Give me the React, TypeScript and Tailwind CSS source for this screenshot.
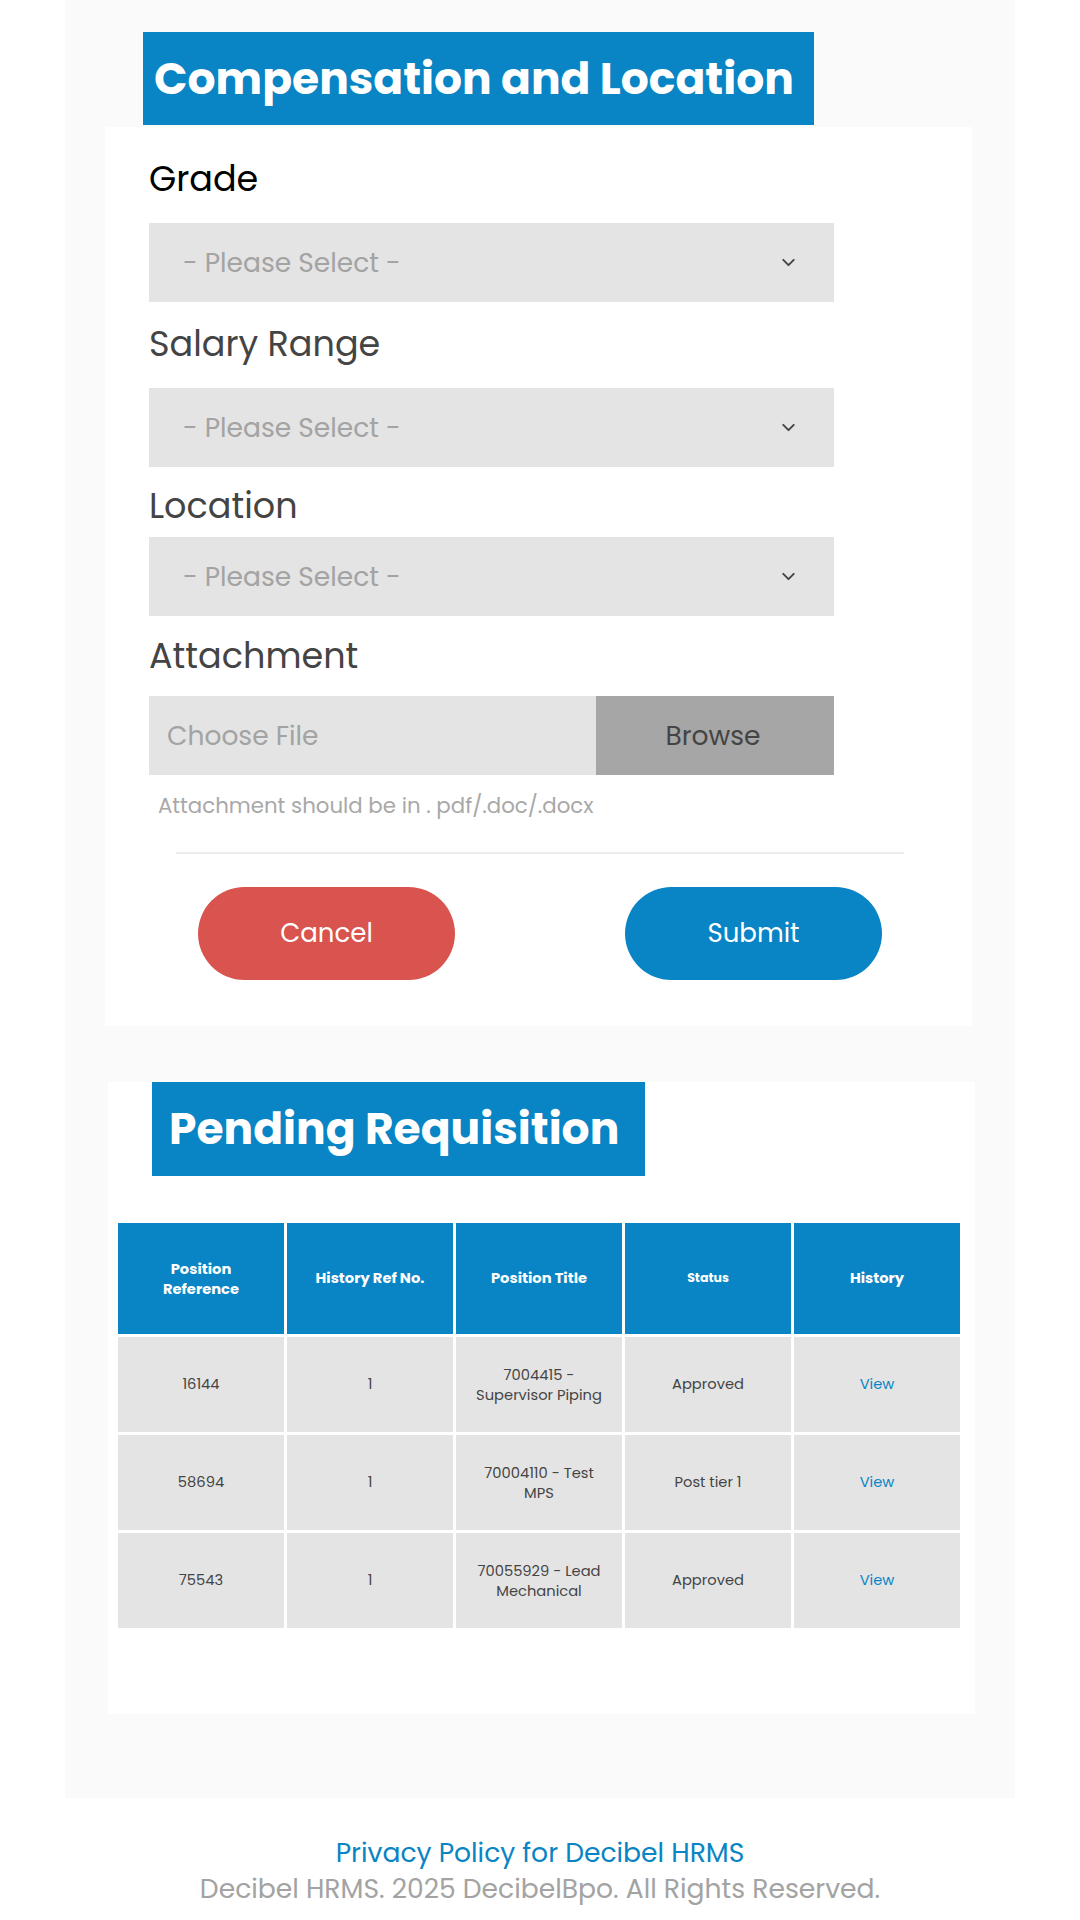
import { ChevronDown } from "lucide-react";

const font = { fontFamily: '"Poppins", Inter, "Noto Sans", sans-serif' };

const rows = [
  { ref: "16144", hist: "1", title: "7004415 - Supervisor Piping", status: "Approved" },
  { ref: "58694", hist: "1", title: "70004110 - Test MPS", status: "Post tier 1" },
  { ref: "75543", hist: "1", title: "70055929 - Lead Mechanical", status: "Approved" },
];

function SelectBox() {
  return (
    <div className="flex h-[79px] w-[685px] items-center justify-between bg-[#e4e4e4] pl-[34px] pr-[35px]">
      <span className="text-[26.5px] text-[#a3a3a3]">- Please Select -</span>
      <ChevronDown className="h-[21px] w-[21px] text-[#444]" strokeWidth={2.2} />
    </div>
  );
}

function Label({ children, dark }: { children: React.ReactNode; dark?: boolean }) {
  return (
    <div className={`text-[35px] leading-[40px] ${dark ? "text-black" : "text-[#444]"}`}>{children}</div>
  );
}

export default function App() {
  return (
    <div className="min-h-screen bg-white" style={font}>
      <div className="ml-[65px] w-[950px] bg-[#fafafa] pt-[32px] pb-[84px]">
        <div className="ml-[78px] flex h-[93px] w-fit items-center bg-[#0984c4] pl-[11px] pr-[20px]">
          <h2 className="text-[44px] font-bold leading-none text-white">Compensation and Location</h2>
        </div>

        <div className="ml-[40px] mt-[2px] w-[867px] bg-white pl-[44px] pt-[32px] pb-[46px]">
          <Label dark>Grade</Label>
          <div className="mt-[24px]">
            <SelectBox />
          </div>
          <div className="mt-[22px]">
            <Label>Salary Range</Label>
          </div>
          <div className="mt-[24px]">
            <SelectBox />
          </div>
          <div className="mt-[19px]">
            <Label>Location</Label>
          </div>
          <div className="mt-[11px]">
            <SelectBox />
          </div>
          <div className="mt-[20px]">
            <Label>Attachment</Label>
          </div>
          <div className="mt-[20px] flex h-[79px] w-[685px]">
            <div className="flex flex-1 items-center bg-[#e4e4e4] pl-[18px] text-[26.5px] text-[#a3a3a3]">Choose File</div>
            <div className="flex w-[238px] items-center justify-center bg-[#a6a6a6] pr-[4px] text-[26.5px] text-[#444]">Browse</div>
          </div>
          <p className="mt-[17px] pl-[9px] text-[21.3px] leading-[28px] text-[#a8a8a8]">Attachment should be in . pdf/.doc/.docx</p>

          <div className="ml-[27px] mt-[32px] h-[2px] w-[728px] bg-[#ececec]" />

          <div className="mt-[33px] flex pl-[49px]">
            <button className="h-[93px] w-[257px] rounded-full bg-[#d9534f] text-[26px] text-white">Cancel</button>
            <button className="ml-[170px] h-[93px] w-[257px] rounded-full bg-[#0984c4] text-[26px] text-white">Submit</button>
          </div>
        </div>

        <div className="ml-[43px] mt-[74px] w-[867px] bg-white pb-[86px]">
          <div className="relative -mt-[18px] ml-[44px] flex h-[94px] w-fit items-center bg-[#0984c4] pl-[17px] pr-[26px]">
            <h2 className="text-[44px] font-bold leading-none text-white">Pending Requisition</h2>
          </div>

          <div className="ml-[10px] mt-[47px] grid w-[842px] grid-cols-5 gap-[3px]">
            <div className="flex h-[111px] items-center justify-center bg-[#0984c4] px-2 text-center text-[14.7px] font-bold leading-[20px] text-white">
              Position
              <br />
              Reference
            </div>
            <div className="flex h-[111px] items-center justify-center bg-[#0984c4] px-2 text-center text-[14.7px] font-bold text-white">History Ref No.</div>
            <div className="flex h-[111px] items-center justify-center bg-[#0984c4] px-2 text-center text-[14.7px] font-bold text-white">Position Title</div>
            <div className="flex h-[111px] items-center justify-center bg-[#0984c4] px-2 text-center text-[12.5px] font-bold text-white">Status</div>
            <div className="flex h-[111px] items-center justify-center bg-[#0984c4] px-2 text-center text-[14.7px] font-bold text-white">History</div>

            {rows.map((r) => (
              <>
                <div key={r.ref + "a"} className="flex h-[95px] items-center justify-center bg-[#e4e4e4] text-[14.7px] text-[#444]">{r.ref}</div>
                <div key={r.ref + "b"} className="flex h-[95px] items-center justify-center bg-[#e4e4e4] text-[14.7px] text-[#444]">{r.hist}</div>
                <div key={r.ref + "c"} className="flex h-[95px] items-center justify-center bg-[#e4e4e4] px-[16px] text-center text-[14.7px] leading-[20px] text-[#444]">{r.title}</div>
                <div key={r.ref + "d"} className="flex h-[95px] items-center justify-center bg-[#e4e4e4] text-[14.7px] text-[#444]">{r.status}</div>
                <div key={r.ref + "e"} className="flex h-[95px] items-center justify-center bg-[#e4e4e4] text-[14.7px] text-[#0984c4]">View</div>
              </>
            ))}
          </div>
        </div>
      </div>

      <footer className="pt-[37px] text-center">
        <a className="block text-[26.6px] leading-[36px] text-[#0984c4]">Privacy Policy for Decibel HRMS</a>
        <p className="text-[26.6px] leading-[36px] text-[#a3a3a3]">Decibel HRMS. 2025 DecibelBpo. All Rights Reserved.</p>
      </footer>
    </div>
  );
}
